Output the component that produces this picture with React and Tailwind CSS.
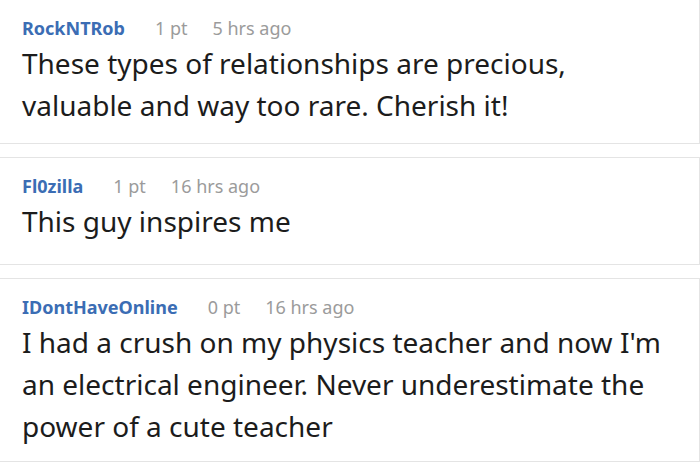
import React from "react";

const comments = [
  {
    user: "RockNTRob",
    points: "1 pt",
    time: "5 hrs ago",
    lines: ["These types of relationships are precious,", "valuable and way too rare. Cherish it!"],
    height: "h-[145px]",
  },
  {
    user: "Fl0zilla",
    points: "1 pt",
    time: "16 hrs ago",
    lines: ["This guy inspires me"],
    height: "h-[108px]",
  },
  {
    user: "IDontHaveOnline",
    points: "0 pt",
    time: "16 hrs ago",
    lines: [
      "I had a crush on my physics teacher and now I'm",
      "an electrical engineer. Never underestimate the",
      "power of a cute teacher",
    ],
    height: "h-[184px]",
  },
];

const Comment = ({ c }) => (
  <div
    className={`${c.height} pt-[15px] bg-white border-y border-r border-[#e4e4e4] pl-[22px] pr-[10px]`}
  >
    {/* Header */}
    <div className="flex items-baseline leading-[26px]">
      <span className="text-[18px] font-bold text-[#3b6db4]">{c.user}</span>
      <span className="ml-[30px] text-[18px] text-[#9b9b9b]">{c.points}</span>
      <span className="ml-[25px] text-[18px] text-[#9b9b9b]">{c.time}</span>
    </div>
    {/* Body */}
    <p className="mt-[1px] text-[28px] leading-[42px] text-[#1c1c1c] whitespace-nowrap">
      {c.lines.map((l, i) => (
        <span key={i} className="block">
          {l}
        </span>
      ))}
    </p>
  </div>
);

export default function App() {
  return (
    <div
      className="w-[700px] h-[464px] overflow-hidden bg-white flex flex-col gap-[13px] -mt-px"
      style={{ fontFamily: '"Noto Sans", sans-serif' }}
    >
      {comments.map((c) => (
        <Comment key={c.user} c={c} />
      ))}
    </div>
  );
}
